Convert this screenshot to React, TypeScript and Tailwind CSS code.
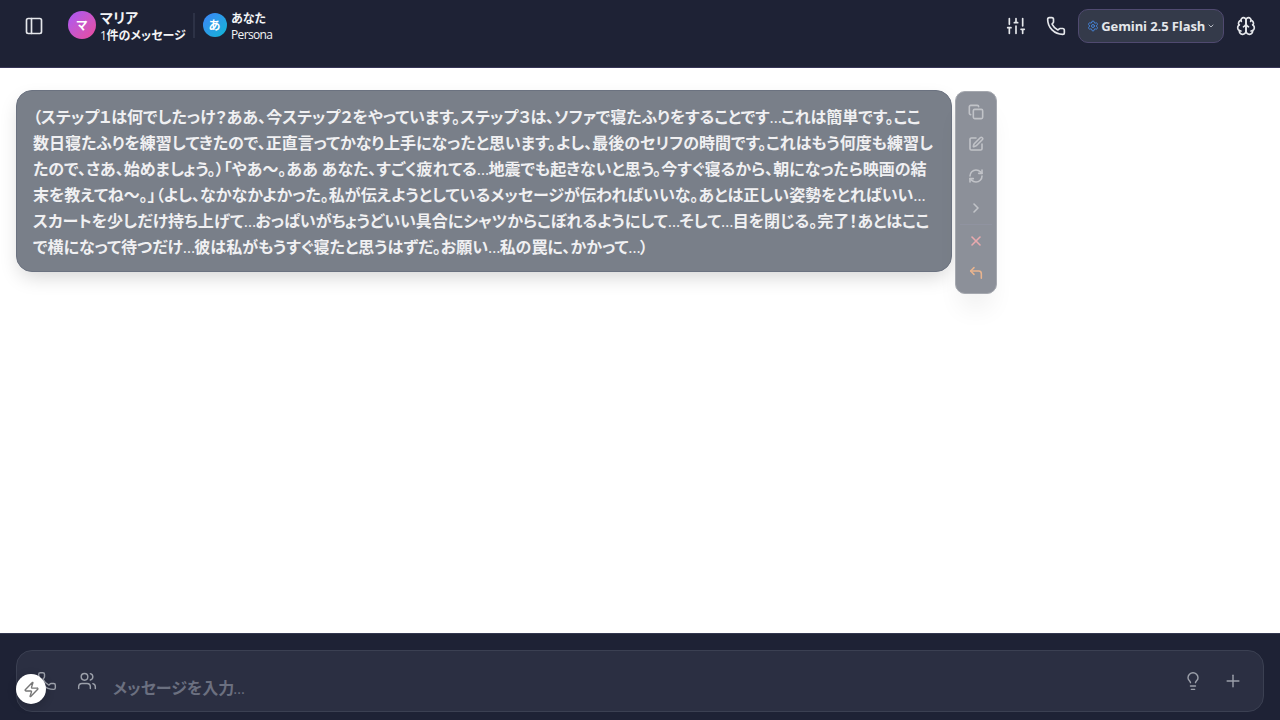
import { Fragment } from "react";
import {
  ChevronDown, ChevronRight, Copy, CornerUpLeft, Lightbulb, PanelLeft, Phone, Plus,
  RefreshCw, Settings, SquarePen, Users, X, Zap,
} from "lucide-react";

const lines = [
  "（ステップ１は何でしたっけ？ああ、今ステップ２をやっています。ステップ３は、ソファで寝たふりをすることです…これは簡単です。ここ",
  "数日寝たふりを練習してきたので、正直言ってかなり上手になったと思います。よし、最後のセリフの時間です。これはもう何度も練習し",
  "たので、さあ、始めましょう。）「やあ～。ああ あなた、すごく疲れてる…地震でも起きないと思う。今すぐ寝るから、朝になったら映画の結",
  "末を教えてね～。」（よし、なかなかよかった。私が伝えようとしているメッセージが伝わればいいな。あとは正しい姿勢をとればいい…",
  "スカートを少しだけ持ち上げて…おっぱいがちょうどいい具合にシャツからこぼれるようにして…そして…目を閉じる。完了！あとはここ",
  "で横になって待つだけ…彼は私がもうすぐ寝たと思うはずだ。お願い…私の罠に、かかって…）",
];

function Line({ text }: { text: string }) {
  const parts = text.split("…");
  return (
    <span className="block h-[26px] whitespace-nowrap">
      {parts.map((part, i) => (
        <Fragment key={i}>
          {i > 0 && <span className="font-['Open_Sans',sans-serif] leading-none font-normal tracking-[-0.9px]">…</span>}
          {part}
        </Fragment>
      ))}
    </span>
  );
}

function Sliders({ className }: { className: string }) {
  return (
    <svg className={className} viewBox="0 0 24 24" fill="none" stroke="currentColor" strokeWidth="2" strokeLinecap="round" strokeLinejoin="round">
      <path d="M4 21v-7M4 10V3M12 21v-9M12 8V3M20 21v-5M20 12V3M2 14h4M10 8h4M18 16h4" />
    </svg>
  );
}

function BrainIcon({ className }: { className: string }) {
  return (
    <svg className={className} viewBox="0 0 24 24" fill="none" stroke="currentColor" strokeWidth="2" strokeLinecap="round" strokeLinejoin="round">
      <path d="M12 5a3 3 0 1 0-5.997.125 4 4 0 0 0-2.526 5.77 4 4 0 0 0 .556 6.588A4 4 0 1 0 12 18Z" />
      <path d="M12 5a3 3 0 1 1 5.997.125 4 4 0 0 1 2.526 5.77 4 4 0 0 1-.556 6.588A4 4 0 1 1 12 18Z" />
      <path d="M15 13a4.5 4.5 0 0 1-3-4 4.5 4.5 0 0 1-3 4" />
      <path d="M17.599 6.5a3 3 0 0 0 .399-1.375M6.003 5.125A3 3 0 0 0 6.401 6.5M3.477 10.896a4 4 0 0 1 .585-.396M19.938 10.5a4 4 0 0 1 .585.396M6 18a4 4 0 0 1-1.967-.516M19.967 17.484A4 4 0 0 1 18 18" />
    </svg>
  );
}

export default function App() {
  return (
    <div className="flex h-[720px] w-[1280px] flex-col overflow-hidden bg-white font-['Noto_Sans_CJK_JP',sans-serif] [font-feature-settings:'palt']">
      <header className="flex h-[68px] shrink-0 items-start justify-between border-b border-[#383657] bg-[#1e2235] px-6 text-gray-100">
        <div className="flex items-start">
          <PanelLeft className="mt-[15.5px] size-5 text-gray-200" />
          <div className="mt-[11px] ml-6 flex size-7 items-center justify-center rounded-full bg-linear-to-br from-[#a855f7] to-[#ec4899] text-xs font-bold text-white">マ</div>
          <div className="mt-[9px] ml-1 flex h-9 w-[93px] flex-col whitespace-nowrap">
            <span className="-mt-px h-[20px] text-[14px] leading-[18px] font-bold">マリア</span>
            <span className="text-[12px] leading-[18px] font-bold"><span className="font-['Open_Sans',sans-serif] font-normal tracking-[-0.3px]">1</span>件のメッセージ</span>
          </div>
          <div className="mt-[13px] h-[25px] w-[2px] bg-[#2d3246]" />
          <div className="mt-[13px] ml-[7.5px] flex size-6 items-center justify-center rounded-full bg-linear-to-br from-[#3b82f6] to-[#06b6d4] text-xs font-bold text-white">あ</div>
          <div className="mt-[10px] ml-[4.5px] flex flex-col whitespace-nowrap">
            <span className="text-[12px] leading-[16px] font-bold">あなた</span>
            <span className="font-['Open_Sans',sans-serif] text-[12px] leading-[18px] tracking-[-0.65px]">Persona</span>
          </div>
        </div>
        <div className="flex h-[51px] items-center text-gray-200">
          <Sliders className="mr-5 size-5" />
          <Phone className="mr-3 size-5" />
          <button className="mr-3 flex h-[34px] w-[146px] items-center rounded-[10px] border border-[#504a70] bg-[#343a4a] pl-2">
            <Settings className="mr-[1.5px] size-3 shrink-0 text-[#4584d8]" />
            <span className="w-[105.5px] shrink-0 pt-[2px] font-['Open_Sans',sans-serif] text-[13px] font-bold tracking-[-0.1px] whitespace-nowrap">Gemini 2.5 Flash</span>
            <ChevronDown className="ml-[1px] size-2 shrink-0 text-gray-300" strokeWidth={2.5} />
          </button>
          <BrainIcon className="size-5" />
        </div>
      </header>
      <main className="flex min-h-0 flex-1 items-start pt-[22px] pl-4">
        <article className="h-[182px] w-[936px] shrink-0 rounded-2xl border border-[#6b7280] bg-[#797f89] px-4 py-3 text-[16px] leading-[26px] font-bold text-[#f0f0f2] shadow-[0_8px_20px_-4px_rgba(0,0,0,0.18)]">
          {lines.map((line) => <Line key={line} text={line} />)}
        </article>
        <aside className="mt-px ml-[3px] flex h-[203px] w-[42px] flex-col items-center rounded-[10px] border border-[#a5a8af] bg-[#8c9099] pt-[12px] text-[#c1c3c8] shadow-[0_20px_25px_-5px_rgba(0,0,0,0.06)]">
          <Copy className="size-4" strokeWidth={2.4} />
          <SquarePen className="mt-4 size-4" strokeWidth={2.4} />
          <RefreshCw className="mt-4 size-4" strokeWidth={2.4} />
          <ChevronRight className="mt-4 size-4" strokeWidth={2.4} />
          <div className="mt-2 h-px w-8 bg-[#9093a0]" />
          <X className="mt-2 size-4 text-[#e9a9ae]" strokeWidth={2.3} />
          <CornerUpLeft className="mt-4 size-4 text-[#e9b48e]" strokeWidth={2.3} />
        </aside>
      </main>
      <footer className="relative h-[87px] shrink-0 border-t border-[#343850] bg-[#1e2235] px-4 pt-4">
        <div className="flex h-[62px] items-start rounded-2xl border border-[#3b4052] bg-[#2b2f42] pt-5 pr-5 pl-5 text-[#9ca0aa]">
          <Phone className="size-5" strokeWidth={1.7} />
          <Users className="ml-5 size-5" strokeWidth={1.7} />
          <span className="mt-[4px] ml-4 flex-1 text-[16px] leading-6 font-bold text-[#6b7080]">メッセージを入力<span className="-ml-px font-['Open_Sans',sans-serif] text-[15px] leading-none font-normal">…</span></span>
          <Lightbulb className="mr-5 size-5" strokeWidth={1.7} />
          <Plus className="size-5" strokeWidth={1.7} />
        </div>
        <button className="absolute top-[40px] left-4 flex size-[30px] items-center justify-center rounded-full bg-white text-[#777] shadow-[0_2px_10px_rgba(0,0,0,0.2)]">
          <Zap className="size-[17px]" />
        </button>
      </footer>
    </div>
  );
}
